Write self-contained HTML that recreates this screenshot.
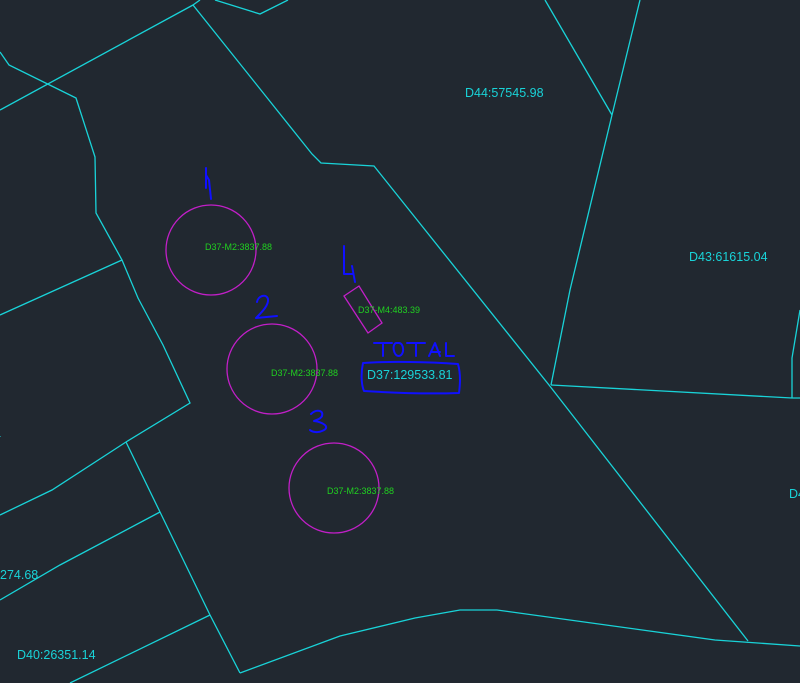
<!DOCTYPE html>
<html><head><style>
html,body{margin:0;padding:0;background:#212830;}
svg{display:block}
text{font-family:"Liberation Sans",sans-serif}
</style></head><body>
<svg width="800" height="683" viewBox="0 0 800 683" xmlns="http://www.w3.org/2000/svg">
<rect width="800" height="683" fill="#212830"/>
<g fill="none" stroke="#19d3d8" stroke-width="1.3">
<polyline points="200,0 193,5 312,154 321,163 374,166 549,385 748,641"/>
<polyline points="0,110 193,5"/>
<polyline points="215,0 260,14 288,0"/>
<polyline points="0,52 9,65 76,98 95,157 96,213 122,260 138,298 163,345 190,403 126,442 52,490 0,515"/>
<polyline points="122,260 0,315"/>
<polyline points="126,442 160,512 210,615 240,673"/>
<polyline points="160,512 60,565 0,600"/>
<polyline points="210,615 70,683"/>
<polyline points="240,673 340,636 415,618 460,610 497,610 715,640 800,646"/>
<polyline points="545,0 612,115"/>
<polyline points="640,0 612,115 570,290 551,385"/>
<polyline points="551,385 792,398 800,398"/>
<polyline points="792,398 792,358 800,310"/>
</g>
<g fill="none" stroke="#c21fc8" stroke-width="1.3">
<circle cx="211" cy="250" r="45"/>
<circle cx="272" cy="369" r="45"/>
<circle cx="334" cy="488" r="45"/>
<polygon points="344,296 359,286 382,323 368,333"/>
</g>
<g fill="none" stroke="#1010ff" stroke-width="2" stroke-linecap="round" stroke-linejoin="round">
<path d="M206,168 L206,188 M206,175 L209,180 L211,199"/>
<path d="M257,302 C258,296 266,293 268,299 C269,305 262,312 256,318 L277,316"/>
<path d="M311,414 C316,409 324,410 322,416 C321,419 316,420 314,421 C322,422 332,427 322,431 C318,433 312,432 310,430"/>
<path d="M344,246 L344,274 L353,274 M352,266 L355,282"/>
<path d="M374,343 L392,343 M383,343 L383,356 M396,343 C392,344 393,356 399,356 C405,355 404,343 399,343 Z M407,343 L425,343 M416,343 L416,356 M429,356 L435,343 L440,356 M431,352 L440,352 M446,343 L446,356 L454,356"/>
<path d="M363,363 C390,361 430,362 458,364 C461,375 460,385 459,393 C430,394 395,393 364,391 C361,384 361,372 363,363 Z"/>
</g>
<g fill="#20d020" font-size="9">
<text x="205" y="250">D37-M2:3837.88</text>
<text x="271" y="376">D37-M2:3837.88</text>
<text x="327" y="494">D37-M2:3837.88</text>
<text x="358" y="313">D37-M4:483.39</text>
</g>
<g fill="#19d3d8" font-size="12.5">
<text x="367" y="379">D37:129533.81</text>
<text x="465" y="97">D44:57545.98</text>
<text x="689" y="261">D43:61615.04</text>
<text x="789" y="498">D4</text>
<text x="0" y="579">274.68</text>
<text x="17" y="659">D40:26351.14</text>
<text x="-6" y="439">4</text>
</g>
</svg>
</body></html>
